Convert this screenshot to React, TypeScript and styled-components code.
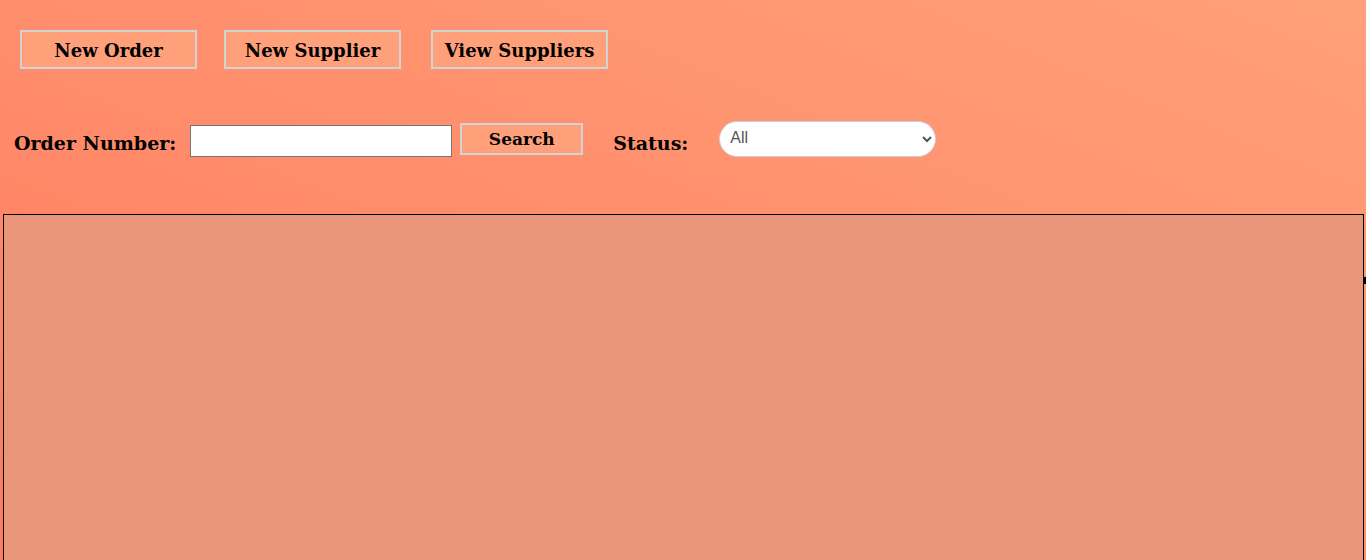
import styled, { createGlobalStyle } from "styled-components";

const GlobalStyle = createGlobalStyle`
  html, body {
    margin: 0;
    padding: 0;
    background: #ff8a68;
    overflow: hidden;
  }
  body {
    font-family: "DejaVu Serif", serif;
  }
`;

export default function App() {
  return (
    <Page>
      <GlobalStyle />
      <Header>
        <ActionBar>
          <ActionButton>New Order</ActionButton>
          <ActionButton>New Supplier</ActionButton>
          <ActionButton $offset={3}>View Suppliers</ActionButton>
        </ActionBar>
        <SearchRow>
          <FieldLabel $gap={14}>Order Number:</FieldLabel>
          <OrderInput type="text" />
          <SearchButton>Search</SearchButton>
          <FieldLabel $gap={31}>Status:</FieldLabel>
          <StatusSelect defaultValue="All">
            <option>All</option>
            <option>Pending</option>
            <option>Received</option>
          </StatusSelect>
        </SearchRow>
      </Header>
      <OrdersPanel />
    </Page>
  );
}

const Page = styled.div`
  width: 1366px;
  height: 560px;
  overflow: hidden;
  background: linear-gradient(to top right, #ff7a5c 0%, #ff8a69 40%, #ffa07a 100%);
`;

const Header = styled.div`
  display: flex;
  flex-direction: column;
  padding: 30px 0 0 0;
  height: 184px;
`;

const ActionBar = styled.div`
  display: flex;
  gap: 27px;
  padding-left: 20px;
`;

const ActionButton = styled.button<{ $offset?: number }>`
  width: 177px;
  height: 39px;
  margin-left: ${(p) => p.$offset ?? 0}px;
  border: 2px solid #d3d3d3;
  background: #ffa07a;
  color: #000;
  font-family: "DejaVu Serif", serif;
  font-weight: bold;
  font-size: 18px;
  padding: 1px 0 0;
  cursor: pointer;
`;

const SearchRow = styled.div`
  display: flex;
  align-items: flex-start;
  margin-top: 52px;
  padding-left: 14px;
`;

const FieldLabel = styled.label<{ $gap: number }>`
  margin-top: 11px;
  margin-right: ${(p) => p.$gap}px;
  font-weight: bold;
  font-size: 19px;
  line-height: 22px;
  color: #000;
`;

const OrderInput = styled.input`
  box-sizing: border-box;
  width: 262px;
  height: 32px;
  margin-top: 4px;
  border: 1px solid #767676;
  background: #fff;
  padding: 0 6px;
  font-size: 15px;
`;

const SearchButton = styled.button`
  box-sizing: border-box;
  width: 123px;
  height: 32px;
  margin: 2px 30px 0 8px;
  border: 2px solid #d3d3d3;
  background: #ffa07a;
  font-family: "DejaVu Serif", serif;
  font-weight: bold;
  font-size: 17px;
  padding: 0 0 1px;
  color: #000;
  cursor: pointer;
`;

const StatusSelect = styled.select`
  box-sizing: border-box;
  width: 217px;
  height: 36px;
  border: 1px solid #cfcfcf;
  border-radius: 18px;
  background: #fff;
  padding: 0 10px 4px 6px;
  font-family: "Liberation Sans", Arial, sans-serif;
  font-size: 16px;
  color: #555;
`;

const OrdersPanel = styled.div`
  position: relative;
  box-sizing: border-box;
  width: 1361px;
  height: 400px;
  margin-left: 3px;
  border: 1px solid #000;
  background: #e9967a;

  &::after {
    content: "";
    position: absolute;
    right: -3px;
    top: 62px;
    width: 2px;
    height: 7px;
    background: #000;
  }
`;
